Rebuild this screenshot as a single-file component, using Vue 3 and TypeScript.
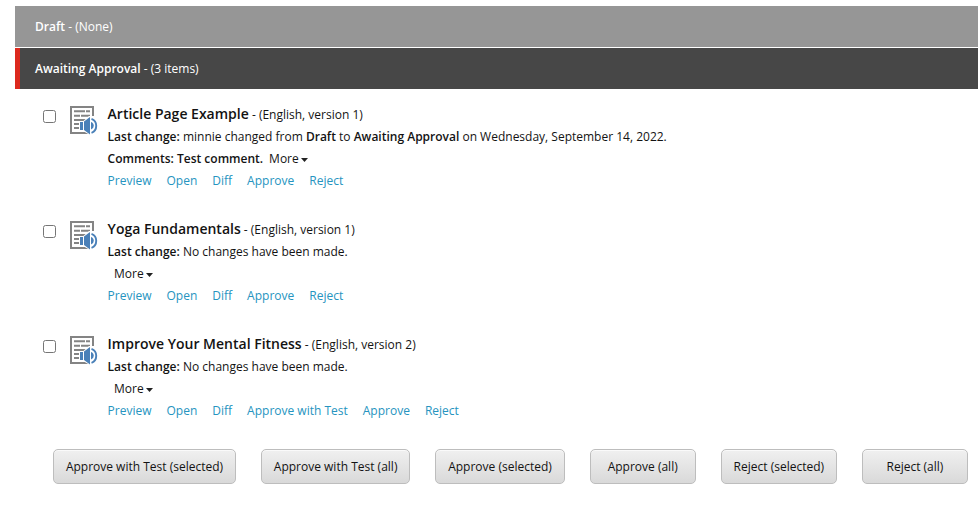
<script setup lang="ts">
interface Item {
  title: string
  version: string
  change?: { user: string; from: string; to: string; date: string }
  comment?: string
  actions: string[]
}

const items: Item[] = [
  {
    title: 'Article Page Example',
    version: '(English, version 1)',
    change: { user: 'minnie', from: 'Draft', to: 'Awaiting Approval', date: 'Wednesday, September 14, 2022' },
    comment: 'Test comment.',
    actions: ['Preview', 'Open', 'Diff', 'Approve', 'Reject'],
  },
  {
    title: 'Yoga Fundamentals',
    version: '(English, version 1)',
    actions: ['Preview', 'Open', 'Diff', 'Approve', 'Reject'],
  },
  {
    title: 'Improve Your Mental Fitness',
    version: '(English, version 2)',
    actions: ['Preview', 'Open', 'Diff', 'Approve with Test', 'Approve', 'Reject'],
  },
]

const buttons: string[] = [
  'Approve with Test (selected)',
  'Approve with Test (all)',
  'Approve (selected)',
  'Approve (all)',
  'Reject (selected)',
  'Reject (all)',
]
</script>

<template>
  <main class="workbox">
    <header class="state"><span><b>Draft</b> - (None)</span></header>
    <header class="state active"><span><b>Awaiting Approval</b> - (3 items)</span></header>

    <section class="items">
      <article v-for="item in items" :key="item.title" class="item">
        <input type="checkbox" class="check" :aria-label="item.title" />
        <svg class="icon" width="28" height="30" viewBox="0 0 28 30">
          <rect x="1" y="1" width="22" height="26" fill="#fff" stroke="#848484" stroke-width="2" />
          <path
            d="M4 5.3h11M16 5.3h4M4 9.7h6M11 9.7h9M4 14h12M4 18h5M4 22h5"
            stroke="#848484"
            stroke-width="2"
          />
          <path d="M9.4 15h4L19 10h9v19h-8L13 25H9.4z" fill="#fff" />
          <path d="M10 16h3v8h-3zM14 15.5L20 11v17.6L14 24z" fill="#4a80b8" />
          <path d="M21 16a4 4 0 0 1 0 7.6z" fill="#4a80b8" />
          <path d="M21.5 12.8C27.8 15 27.8 24.6 21.5 26.8" fill="none" stroke="#4a80b8" stroke-width="1.9" />
        </svg>
        <div class="body">
          <div class="line heading"><span class="title">{{ item.title }}</span><span> - {{ item.version }}</span></div>
          <div class="line">
            <b>Last change:</b>{{ ' ' }}
            <span v-if="item.change">{{ item.change.user }} changed from <b>{{ item.change.from }}</b> to <b>{{ item.change.to }}</b> on {{ item.change.date }}.</span>
            <span v-else>No changes have been made.</span>
          </div>
          <div class="line">
            <b v-if="item.comment">Comments: {{ item.comment }}</b>
            <span class="more">More<svg width="7" height="4" viewBox="0 0 7 4"><path d="M0 0h7L3.5 4z" fill="#222" /></svg></span>
          </div>
          <nav class="line actions">
            <a v-for="action in item.actions" :key="action">{{ action }}</a>
          </nav>
        </div>
      </article>
    </section>

    <footer class="buttons">
      <button v-for="label in buttons" :key="label" type="button">{{ label }}</button>
    </footer>
  </main>
</template>

<style>
body {
  background: #fff;
  overflow: hidden;
}
</style>

<style scoped>
.workbox {
  padding: 6px 0 0 15px;
  font: 12px/22px 'Open Sans', sans-serif;
  color: #131313;
  white-space: nowrap;
}
b {
  font-weight: 600;
}
.state {
  height: 41px;
  margin-bottom: 1px;
  padding-left: 20px;
  box-sizing: border-box;
  line-height: 42px;
  background: #969696;
  color: #fff;
}
.state.active {
  margin: 0;
  padding-left: 15px;
  border-left: 5px solid #dc291e;
  background: #474747;
}
.items {
  padding: 14px 0 0 28px;
}
.item {
  display: flex;
  align-items: flex-start;
  height: 115px;
}
.check {
  width: 13px;
  height: 13px;
  margin: 7px 14px 0 0;
}
.icon {
  margin-top: 3px;
  flex: none;
}
.body {
  margin-left: 9.6px;
}
.line {
  height: 22px;
}
.heading {
  height: 23px;
}
.title {
  font-size: 14px;
  font-weight: 600;
}
.more {
  margin-left: 6.4px;
}
b + .more {
  margin-left: 6px;
}
.more svg {
  margin-left: 2px;
  vertical-align: 1px;
}
.actions {
  display: flex;
  gap: 15px;
  color: #2694c0;
}
.buttons {
  display: flex;
  gap: 25px;
  padding: 1px 0 0 38px;
}
button {
  box-sizing: border-box;
  height: 35px;
  min-width: 106px;
  padding: 0 11.88px;
  border: 1px solid #bdbdbd;
  border-radius: 5px;
  background: linear-gradient(#f0f0f0, #d9d9d9);
  box-shadow: inset 0 1px 0 #fafafa;
  font: inherit;
  color: #131313;
}
</style>
